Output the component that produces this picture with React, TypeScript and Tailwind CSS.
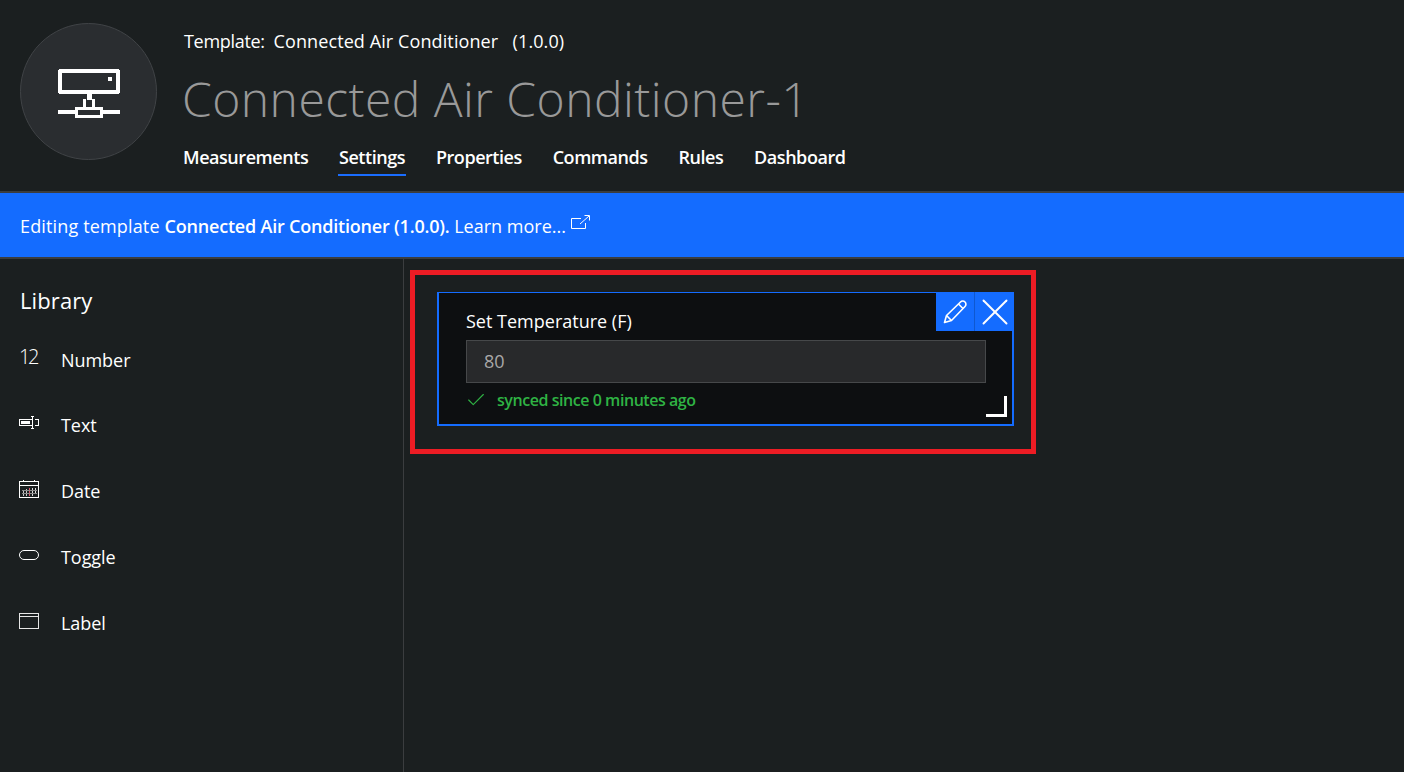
import { Check, X } from 'lucide-react';

function DeviceIcon() {
  return (
    <svg width="62" height="49" viewBox="0 0 62 49" fill="none" stroke="white" strokeWidth="4" shapeRendering="crispEdges" className="mt-[3px] ml-[1px]">
      <rect x="2" y="2" width="58" height="21" rx="1" />
      <rect x="50" y="8" width="4" height="4" fill="white" stroke="none" />
      <rect x="29" y="25" width="5" height="6" fill="white" stroke="none" />
      <path d="M26.500 30v9M35.500 30v9" strokeWidth="3" />
      <rect x="18.500" y="39.500" width="25" height="8" strokeWidth="3" />
      <path d="M0 43h17M45 43h17" strokeWidth="4" />
    </svg>
  );
}

function PencilIcon() {
  return (
    <svg width="24" height="24" viewBox="0 0 24 24" fill="none" stroke="white" strokeWidth="1.6" strokeLinejoin="round">
      <path d="M1.500 22.500l2-7L17.500 2a3 3 0 0 1 4.500 4.500L8.500 20.500z" />
      <path d="M3.500 15.500l5 5M15.500 4l4.500 4.500" />
    </svg>
  );
}

function TextIcon() {
  return (
    <svg width="20" height="14" viewBox="0 0 20 14" fill="none" stroke="white" strokeWidth="1" shapeRendering="crispEdges">
      <path d="M13.500 3.500H.5v6h13" />
      <rect x="2" y="5" width="9" height="3" fill="white" stroke="none" />
      <path d="M15.500 3.500h3.500v6h-3.500" />
      <path d="M12 .5h3M13.500 .5v12M12 12.500h3" />
    </svg>
  );
}

function DateIcon() {
  return (
    <svg width="20" height="18" viewBox="0 0 20 18" fill="none" stroke="white" strokeWidth="1" shapeRendering="crispEdges">
      <rect x="0.5" y="1.500" width="19" height="16" />
      <path d="M0 5.500h20M4.500 0v2M15.500 0v2" />
      <path d="M4.500 10v6M7.500 9v7" stroke="#c8c8c8" />
      <path d="M10.500 8v8" stroke="#e0556a" />
      <path d="M13.500 8v8M16.500 8v5" stroke="#dcdcdc" />
      <path d="M3 10.500h15M3 13.500h15" stroke="#8a8a8a" />
    </svg>
  );
}

function ToggleIcon() {
  return <div className="w-5 h-[10px] rounded-[5px] border border-white" />;
}

function LabelIcon() {
  return (
    <div className="w-5 h-4 border border-[#e6e6e6]">
      <div className="h-[3px] border-b border-[#e6e6e6]" />
    </div>
  );
}

const tabs = ['Measurements', 'Settings', 'Properties', 'Commands', 'Rules', 'Dashboard'];

const library = [
  { label: 'Number', icon: <span className="text-[20px] font-light leading-none text-white block tracking-[-2.5px] -mt-[2px]">12</span> },
  { label: 'Text', icon: <TextIcon /> },
  { label: 'Date', icon: <DateIcon /> },
  { label: 'Toggle', icon: <ToggleIcon /> },
  { label: 'Label', icon: <LabelIcon /> },
];

export default function App() {
  return (
    <div className="w-[1404px] h-[772px] overflow-hidden flex flex-col bg-[#1b1f20] text-white font-['Open_Sans',sans-serif]">
      {/* Header */}
      <header className="h-[193px] shrink-0 border-b-2 border-[#3b3d3f] flex pl-5 pt-[23px]">
        <div className="w-[137px] h-[137px] rounded-full bg-[#2a2d30] border border-[#404346] flex items-center justify-center shrink-0">
          <DeviceIcon />
        </div>
        <div className="ml-[26px] flex flex-col">
          <div className="text-[18px] leading-[24px] mt-[6px] ml-[1px] whitespace-pre tracking-[0.1px]">
            <span className="tracking-[-0.3px]">Template:  </span>Connected Air Conditioner   (1.0.0)
          </div>
          <h1 className="text-[48px] leading-[62px] mt-[15px] -ml-[1px] text-[#999999] font-light tracking-[0.45px]">Connected Air Conditioner-1</h1>
          <nav className="flex gap-[30.8px] mt-[14px]">
            {tabs.map((tab) => (
              <div key={tab} className={tab === 'Settings' ? 'h-[32px] border-b-2 border-[#1a6dff] text-[18px] leading-[26px] font-semibold tracking-[-0.45px] px-[1px] -mx-[1px]' : 'h-[32px] text-[18px] leading-[26px] font-semibold tracking-[-0.45px]'}>
                {tab}
              </div>
            ))}
          </nav>
        </div>
      </header>

      {/* Banner */}
      <div className="h-[66px] shrink-0 bg-[#146cff] border-b-2 border-[#3b3d3f] flex items-center pl-5 pt-[2px] text-[18px]">
        <span className="whitespace-pre tracking-[0.15px]">Editing template </span>
        <span className="font-semibold whitespace-pre tracking-[-0.2px]">Connected Air Conditioner (1.0.0).</span>
        <span className="whitespace-pre"> Learn more... </span>
        <svg className="-mt-[8px]" width="20" height="15" viewBox="0 0 20 15" fill="none" stroke="white" strokeWidth="1">
          <path d="M10 3.500H.5v10h14V8" />
          <path d="M9 9l9-8M13.500.5h5v5" />
        </svg>
      </div>

      <div className="flex-1 flex min-h-0">
        {/* Library */}
        <aside className="w-[404px] shrink-0 border-r border-[#3b3d3f] pl-5 pt-[25px]">
          <h2 className="text-[22px] leading-[32px] tracking-[0.1px]">Library</h2>
          <div className="mt-[29px] flex flex-col gap-[35.8px]">
            {library.map((item) => (
              <div key={item.label} className="h-[30px] flex items-center">
                <div className="w-[41px] shrink-0 -ml-[1px] mr-[1px] -mt-[5px]">{item.icon}</div>
                <span className="text-[18px] tracking-[-0.05px]">{item.label}</span>
              </div>
            ))}
          </div>
        </aside>

        {/* Canvas */}
        <main className="flex-1 pl-[6px] pt-[11px]">
          <div className="w-[626px] h-[184px] border-[5px] border-[#ed1c24] pl-[22px] pt-[17px]">
            <div className="relative w-[577px] h-[134px] bg-[#0d0f11] border-2 border-[#146cff] border-t pl-[27px] pt-[14px]">
              <div className="absolute -top-px -right-[2px] flex">
                <div className="w-[39px] h-[39px] bg-[#146cff] border-r border-[#0f58d0] flex items-center justify-center">
                  <PencilIcon />
                </div>
                <div className="w-[39px] h-[39px] bg-[#146cff] flex items-center justify-center">
                  <X size={46} strokeWidth={1} className="shrink-0" />
                </div>
              </div>
              <div className="text-[18px] leading-[28px]">Set Temperature (F)</div>
              <div className="mt-[5px] w-[520px] h-[43px] bg-[#28292b] border border-[#46484a] flex items-center pl-[17px] text-[18px] text-[#a8a8a8]">80</div>
              <div className="mt-[4px] flex items-center text-[#2fb344] text-[16px] font-semibold tracking-[-0.45px] leading-[26px]">
                <Check size={22} strokeWidth={1.2} className="mr-[10px] text-[#2fb344] -ml-[1px]" />
                synced since 0 minutes ago
              </div>
              <div className="absolute right-[5px] bottom-[7px] w-[21px] h-[21px] border-r-[3px] border-b-[3px] border-white" />
            </div>
          </div>
        </main>
      </div>
    </div>
  );
}
